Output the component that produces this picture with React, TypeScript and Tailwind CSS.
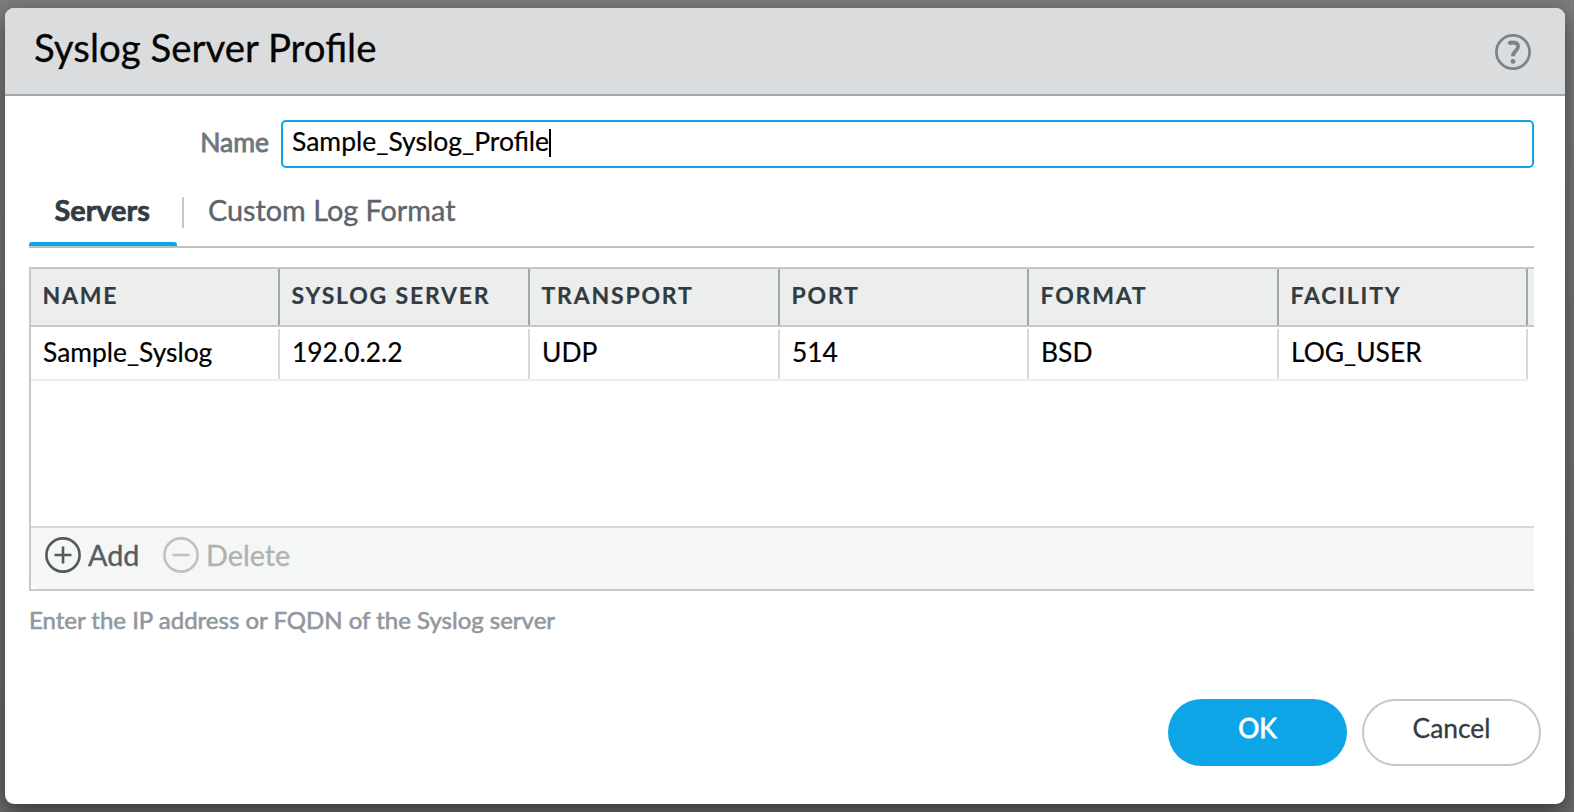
import React from "react";

const columns = [
  { title: "NAME", value: "Sample_Syslog", width: "w-[249px]" },
  { title: "SYSLOG SERVER", value: "192.0.2.2", width: "w-[250px]" },
  { title: "TRANSPORT", value: "UDP", width: "w-[250px]" },
  { title: "PORT", value: "514", width: "w-[249px]" },
  { title: "FORMAT", value: "BSD", width: "w-[250px]" },
  { title: "FACILITY", value: "LOG_USER", width: "w-[249px]" },
];

function HelpIcon() {
  return (
    <svg width="36" height="36" viewBox="0 0 36 36" fill="none" stroke="#7b838a" className="block">
      <circle cx="18" cy="18" r="16.6" strokeWidth="2.7" />
      <path d="M13.4 9.6C14.8 8.8 16.2 8.5 18 8.5c3.3 0 5.1 1.5 5.1 4.1 0 4.2-5.2 4.2-5.2 9.6" strokeWidth="3.8" />
      <circle cx="18" cy="27.4" r="2.4" fill="#7b838a" stroke="none" />
    </svg>
  );
}

function RoundIcon({ color, plus }: { color: string; plus?: boolean }) {
  return (
    <svg width="36" height="36" viewBox="0 0 36 36" fill="none" stroke={color} strokeWidth="2.6" className="block">
      <circle cx="18" cy="18" r="16.6" />
      <path d={plus ? "M9.5 18h17M18 9.5v17" : "M9.5 18h17"} />
    </svg>
  );
}

export default function App() {
  return (
    <div className="h-[812px] w-[1574px] overflow-hidden bg-linear-to-b from-[#7d7d7d] to-[#6b6b6b] pt-2 pl-[5px] font-[Lato,sans-serif]">
      <div className="flex h-[796px] w-[1560px] flex-col overflow-hidden rounded-[9px] bg-white shadow-[0_8px_24px_rgba(0,0,0,0.5)]">
        <header className="flex h-22 shrink-0 items-start justify-between border-b-2 border-[#a0a8ad] bg-[#dbdcde] pr-[34px] pl-[29px]">
          <h1 className="pt-[16px] text-[38.4px] leading-[46px] text-[#050505] [-webkit-text-stroke:0.3px]">Syslog Server Profile</h1>
          <div className="pt-[26px]">
            <HelpIcon />
          </div>
        </header>

        <div className="mt-6 flex h-12 shrink-0 pr-[31px]">
          <label className="w-[264px] pt-[6px] text-right text-[26.5px] leading-[32px] text-[#6f777e] [-webkit-text-stroke:0.9px]">Name</label>
          <div className="ml-3 flex flex-1 rounded-[5px] border-2 border-[#0da4e8] pt-[4px] pl-[9px]">
            <span className="text-[26.5px] leading-[30px] text-black [-webkit-text-stroke:0.2px]">Sample_Syslog_Profile</span>
            <span className="mt-[3px] h-7 w-[2px] bg-black" />
          </div>
        </div>

        <nav className="mt-6 mr-[31px] ml-6 flex h-14 shrink-0 border-b-2 border-[#bfc0c0]">
          <div className="flex w-[148px] flex-col justify-between">
            <span className="pl-[25.5px] text-[28.8px] leading-[36px] font-bold text-[#333b42] [-webkit-text-stroke:0.7px]">Servers</span>
            <span className="h-1 rounded-t-[3px] bg-[#0da4e8]" />
          </div>
          <span className="mt-[5px] ml-[5px] h-[31px] w-[2px] bg-[#c4c9cd]" />
          <span className="pl-6 text-[28.8px] leading-[36px] text-[#5c656d] [-webkit-text-stroke:0.4px]">Custom Log Format</span>
        </nav>

        <section className="mt-[19px] mr-[31px] ml-6 h-[324px] shrink-0 border-y-2 border-l-2 border-[#c5c9cc]">
          <div className="flex h-[58px] border-b-2 border-[#c5c9cc] bg-[#ebeeed]">
            {columns.map((c) => (
              <div key={c.title} className={`${c.width} shrink-0 border-r-2 border-[#a0a7ab] pt-[12px] pl-[11.5px] text-[23px] leading-[28px] font-bold tracking-[1.8px] text-[#333b42] [-webkit-text-stroke:0.2px]`}>
                {c.title}
              </div>
            ))}
          </div>
          <div className="flex h-[54px] w-[1497px] border-b-2 border-[#ebecec] pt-[2px]">
            {columns.map((c) => (
              <div key={c.title} className={`${c.width} shrink-0 border-r-2 border-[#d7d8d8] pt-[7px] pl-3 text-[26.4px] leading-[32px] text-black [-webkit-text-stroke:0.2px]`}>
                {c.value}
              </div>
            ))}
          </div>
          <div className="mt-[145px] flex h-[63px] rounded-bl-[9px] border-t-2 border-[#d5d8d8] bg-[#f5f7f6] pt-[9px] pl-[14px]">
            <RoundIcon color="#55595d" plus />
            <span className="ml-[7px] w-[75px] text-[28.8px] leading-[37px] text-[#565d62] [-webkit-text-stroke:0.4px]">Add</span>
            <RoundIcon color="#c0c2c2" />
            <span className="ml-[7px] text-[28.8px] leading-[37px] text-[#afb1b1] [-webkit-text-stroke:0.3px]">Delete</span>
          </div>
        </section>

        <p className="mt-[14px] ml-6 text-[24px] leading-[30px] text-[#91989e] [-webkit-text-stroke:0.6px]">Enter the IP address or FQDN of the Syslog server</p>

        <footer className="mt-[64px] mr-6 flex justify-end gap-[15px]">
          <button className="h-[67px] w-[179px] rounded-full bg-[#0da4e8] pb-[10px] text-[26.4px] leading-[32px] text-white [-webkit-text-stroke:0.8px]">OK</button>
          <button className="h-[67px] w-[179px] rounded-full border-2 border-[#c5c9cc] pb-[10px] text-[26.4px] leading-[32px] text-[#333b42] [-webkit-text-stroke:0.3px]">Cancel</button>
        </footer>
      </div>
    </div>
  );
}
